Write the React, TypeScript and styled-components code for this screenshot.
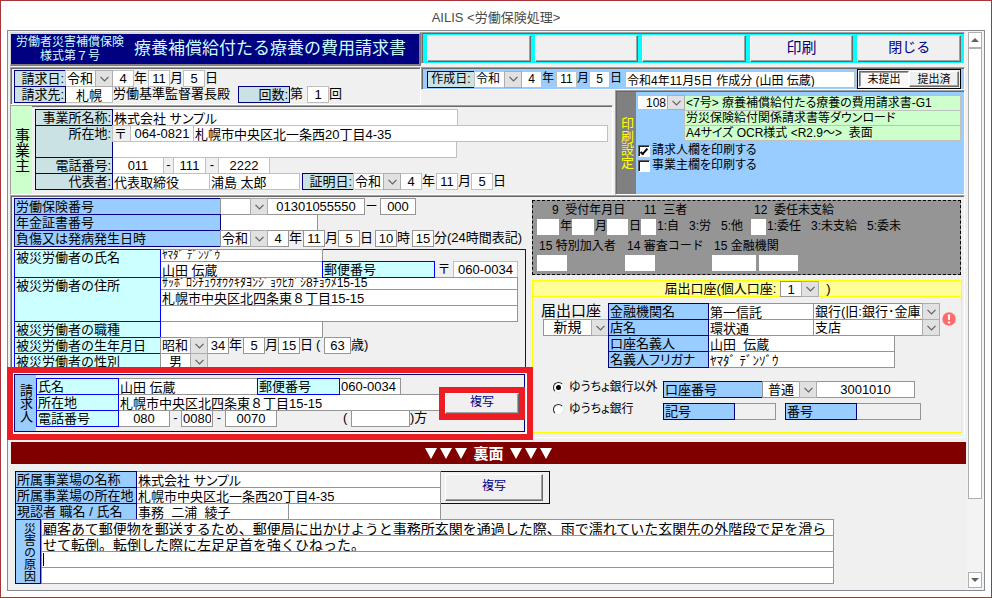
import React from "react";
import styled, { createGlobalStyle, css } from "styled-components";

const NAVY = "#000080";
const BLUE = "#0000ff";
const SKY = "#99ccff";
const AQUA = "#ccffff";
const TEAL = "#cbe2e4";
const MINT = "#ccffcc";
const FACE = "#f0f0f0";
const MARK = "#ed1c24";

const Global = createGlobalStyle`
  *, *::before, *::after { box-sizing: border-box; }
  body {
    margin: 0;
    background: #fff;
    color: #000;
    font: 13px/15px "Liberation Sans", "Noto Sans CJK JP", sans-serif;
  }
  input, select, button { font: inherit; color: inherit; margin: 0; border-radius: 0; }
`;

/* ---------- window ---------- */

const Window = styled.div`
  display: flex;
  flex-direction: column;
  min-height: 100vh;
  padding: 0 6px 6px;
  border: 1px solid #a8343c;
`;

const TitleBar = styled.header`
  display: flex;
  align-items: center;
  justify-content: center;
  height: 29px;
  padding-top: 4px;
  font-size: 13px;
  color: #4a4a4a;
`;

const Frame = styled.div`
  display: flex;
  flex: 1;
  border: 1px solid #868b91;
`;

const Form = styled.main`
  flex: 1;
  min-width: 0;
  padding: 1px 2px 0;
  background: ${FACE};
  white-space: nowrap;
`;

const ScrollBar = styled.div`
  display: flex;
  flex-direction: column;
  width: 17px;
  padding: 1px 2px 2px 1px;
  background: #f3f3f3;
`;

const ScrollButton = styled.button`
  display: grid;
  place-items: center;
  height: 16px;
  padding: 0;
  border: 1px solid #b0b0b0;
  background: #fff;
`;

const Track = styled.div`
  display: flex;
  flex-direction: column;
  flex: 1;
`;

const Thumb = styled.div`
  flex: 0 0 86%;
  border: 1px solid #b0b0b0;
  background: #fff;
`;

/* ---------- shared parts ---------- */

const Panel = styled.section<{ $bg?: string }>`
  border: 1px solid;
  border-color: #a0a0a0 #fff #fff #a0a0a0;
  box-shadow: inset 1px 1px 0 #696969;
  background: ${(p) => p.$bg ?? FACE};
`;

const Row = styled.div<{ $h?: number; $indent?: number; $middle?: boolean }>`
  display: flex;
  align-items: ${(p) => (p.$middle ? "center" : "stretch")};
  height: ${(p) => p.$h ?? 16}px;
  padding-left: ${(p) => p.$indent ?? 0}px;
`;

const Stack = styled.div<{ $w?: number }>`
  display: flex;
  flex-direction: column;
  flex: ${(p) => (p.$w ? `0 0 ${p.$w}px` : "1")};
  min-width: 0;
`;

type CellProps = {
  $w?: number;
  $h?: number;
  $bg?: string;
  $line?: string;
  $align?: string;
  $pad?: number;
  $size?: number;
  $tight?: boolean;
};

/* Bordered cells share their edges: each one overlaps the next by one pixel. */
const cell = css<CellProps>`
  flex: ${(p) => (p.$w ? `0 0 ${p.$w + 1}px` : "1")};
  min-width: 0;
  height: ${(p) => (p.$h ?? 16) + 1}px;
  margin: 0 -1px -1px 0;
  padding: 0 ${(p) => p.$pad ?? 1}px;
  border: 1px solid ${(p) => p.$line ?? "var(--line)"};
  background: ${(p) => p.$bg ?? "#fff"};
  text-align: ${(p) => p.$align ?? "left"};
  font-size: ${(p) => (p.$size ? `${p.$size}px` : "inherit")};
  font-feature-settings: ${(p) => (p.$tight ? '"palt"' : "normal")};
  line-height: 15px;
  outline: none;
`;

const Caption = styled.label<CellProps>`
  ${cell}
  position: relative;
  overflow: hidden;
`;

const Input = styled.input<CellProps>`
  ${cell}
`;

const Text = styled.span<{ $w?: number; $size?: number; $tight?: boolean; $align?: string }>`
  flex: 0 0 ${(p) => (p.$w ? `${p.$w}px` : "auto")};
  padding-left: 1px;
  line-height: 15px;
  text-align: ${(p) => p.$align ?? "left"};
  font-size: ${(p) => (p.$size ? `${p.$size}px` : "inherit")};
  font-feature-settings: ${(p) => (p.$tight ? '"palt"' : "normal")};
  white-space: pre;
`;

const Gap = styled.span<{ $w: number }>`
  flex: 0 0 ${(p) => p.$w}px;
`;

const Lines = styled.div<{ $line: string; $size?: number }>`
  --line: ${(p) => p.$line};
  font-size: ${(p) => p.$size ?? 13}px;
`;

const ComboBox = styled.span<{ $w: number; $h: number }>`
  position: relative;
  display: flex;
  flex: 0 0 ${(p) => p.$w + 1}px;
  height: ${(p) => p.$h + 1}px;
  margin: 0 -1px -1px 0;
`;

const Select = styled.select<{ $align: string }>`
  appearance: none;
  width: 100%;
  padding: 0 18px 0 1px;
  border: 1px solid var(--line);
  background: #fff;
  line-height: 15px;
  text-align: ${(p) => p.$align};
  text-align-last: ${(p) => p.$align};
  outline: none;
`;

const Arrow = styled.span`
  position: absolute;
  top: 0;
  right: 0;
  bottom: 0;
  display: grid;
  place-items: center;
  width: 18px;
  border: 1px solid #adadad;
  background: #e1e1e1;
  pointer-events: none;
`;

const Upright = styled.div<{ $w: number; $bg: string; $color?: string; $size?: number; $line?: string }>`
  display: flex;
  align-items: center;
  justify-content: center;
  flex: 0 0 ${(p) => p.$w}px;
  border: ${(p) => (p.$line ? `1px solid ${p.$line}` : "0")};
  background: ${(p) => p.$bg};
  color: ${(p) => p.$color ?? "#000"};
  font-size: ${(p) => p.$size ?? 13}px;
  writing-mode: vertical-rl;
`;

const RaisedButton = styled.button<{ $w?: number; $h: number; $size?: number }>`
  flex: ${(p) => (p.$w ? `0 0 ${p.$w}px` : "1")};
  min-width: 0;
  height: ${(p) => p.$h}px;
  padding: 0 0 2px;
  border: 1px solid;
  border-color: #fff #696969 #696969 #fff;
  box-shadow: inset -1px -1px 0 #a0a0a0;
  background: ${FACE};
  color: ${NAVY};
  font-size: ${(p) => p.$size ?? 12}px;
`;

function Combo({ w, h = 16, value, label, align = "left" }: { w: number; h?: number; value: string; label: string; align?: string }) {
  return (
    <ComboBox $w={w} $h={h}>
      <Select $align={align} aria-label={label} defaultValue={value}>
        <option>{value}</option>
      </Select>
      <Arrow>
        <svg width="9" height="6" viewBox="0 0 9 6" fill="none" stroke="#606060" strokeWidth="1.2">
          <path d="M.5 .8 4.5 4.8 8.5 .8" />
        </svg>
      </Arrow>
    </ComboBox>
  );
}

type FieldProps = {
  id?: string;
  w?: number;
  h?: number;
  value?: string;
  label: string;
  align?: string;
  bg?: string;
  size?: number;
  tight?: boolean;
  line?: string;
};

function Field({ id, w, h, value = "", label, align, bg, size, tight, line }: FieldProps) {
  return (
    <Input id={id} $w={w} $h={h} $align={align} $bg={bg} $size={size} $tight={tight} $line={line} aria-label={label} defaultValue={value} />
  );
}

type DateProps = { name: string; era: string; y: string; m: string; d: string; box?: number; eraW?: number };

function DateFields({ name, era, y, m, d, box = 21, eraW = 47 }: DateProps) {
  return (
    <>
      <Combo w={eraW} value={era} label={`${name} 元号`} />
      <Field w={box} value={y} label={`${name} 年`} align="center" />
      <Text $w={15}>年</Text>
      <Field w={box} value={m} label={`${name} 月`} align="center" />
      <Text $w={13}>月</Text>
      <Field w={box} value={d} label={`${name} 日`} align="center" />
      <Text $w={16}>日</Text>
    </>
  );
}

/* ---------- top area ---------- */

const TopGrid = styled.div`
  display: grid;
  grid-template-columns: 411px 194px minmax(0, 1fr);
  grid-template-rows: 35px 23px 15px minmax(90px, auto);
`;

const Heading = styled.div`
  display: flex;
  align-items: center;
  gap: 10px;
  margin-bottom: 1px;
  padding-left: 5px;
  border: solid #808080;
  border-width: 2px 2px 2px 1px;
  border-top-color: #d8d8d8;
  border-left-color: #d8d8d8;
  background: ${NAVY};
  color: #ccffff;
`;

const FormKind = styled.div`
  font-size: 12px;
  line-height: 14px;
  text-align: center;
`;

const FormName = styled.h1`
  margin: 0;
  font-size: 17px;
  font-weight: 400;
  line-height: 24px;
`;

const Commands = styled(Panel)`
  grid-column: 2 / 4;
  display: flex;
  align-items: center;
  gap: 4px;
  margin-bottom: 3px;
  padding: 1px 3px 0 5px;
`;

const RequestPanel = styled(Panel)`
  grid-row: 2 / 4;
  padding: 2px 3px;
`;

const CreatedPanel = styled(Panel)`
  grid-column: 2 / 4;
  display: flex;
  align-items: center;
  padding: 0 3px 0 5px;
  font-size: 12px;
`;

const CreatedFields = styled(Lines)`
  display: flex;
  flex: 1;
  min-width: 0;
  margin-right: 3px;
`;

const Toggle = styled.div`
  display: flex;
  flex: 0 0 104px;
  height: 20px;
  padding: 1px;
  border: 1px solid #000;
  background: ${FACE};
`;

const ToggleButton = styled.button<{ $on?: boolean }>`
  flex: 1;
  padding: 0;
  border: 1px solid;
  border-color: ${(p) => (p.$on ? "#696969 #fff #fff #696969" : "#fff #696969 #696969 #fff")};
  box-shadow: inset ${(p) => (p.$on ? "1px 1px" : "-1px -1px")} 0 #a0a0a0;
  background: ${(p) => (p.$on ? "#f8f8f8" : FACE)};
  font-size: 11px;
  line-height: 12px;
`;

const EmployerPanel = styled(Panel)`
  grid-row: 4;
  grid-column: 1 / 3;
  display: flex;
  margin-right: 2px;
`;

const EmployerRows = styled(Lines)`
  flex: 1;
  padding: 3px 5px 3px 3px;
`;

const PrintPanel = styled(Panel)`
  grid-row: 3 / 5;
  grid-column: 3;
  display: flex;
  padding: 1px 0 0 1px;
`;

const PrintBody = styled(Lines)`
  flex: 1;
  min-width: 0;
  padding: 3px 3px 0 1px;
`;

const GreenLines = styled.div`
  flex: 1;
  min-width: 0;
`;

const GreenLine = styled.output<CellProps>`
  ${cell}
  display: block;
  margin-right: 0;
`;

const CheckList = styled.div`
  padding: 3px 0 0 1px;
`;

const CheckLine = styled.label`
  display: flex;
  align-items: center;
  gap: 2px;
  height: 15px;
  font-size: 12px;
  font-feature-settings: "palt";
`;

const CheckBox = styled.input`
  appearance: none;
  display: grid;
  place-items: center;
  width: 12px;
  height: 12px;
  border: 1px solid;
  border-color: #606060 #fff #fff #606060;
  box-shadow: inset 1px 1px 0 #202020;
  background: #fff;
  &:checked::after {
    content: "";
    width: 4px;
    height: 8px;
    border: solid #000;
    border-width: 0 2px 2px 0;
    transform: rotate(42deg);
  }
`;

/* ---------- middle area ---------- */

const Middle = styled(Panel)`
  display: flex;
  padding: 2px 2px 4px 3px;
`;

const LeftColumn = styled(Lines)`
  flex: 0 0 518px;
`;

const Injured = styled.div`
  width: 512px;
  margin-top: 3px;
  box-shadow: inset 0 0 0 1px ${BLUE};
`;

const Block = styled.div`
  display: flex;
`;

const Claimant = styled.div`
  position: relative;
  display: flex;
  width: 511px;
  height: 58px;
  margin-top: 5px;
  border: 1px solid ${NAVY};
  background: ${FACE};
`;

const Highlight = styled.div`
  position: absolute;
  inset: -8px -9px -9px -8px;
  border: 6px solid ${MARK};
  box-shadow: inset 0 0 0 1px #fff;
  pointer-events: none;
`;

const ClaimantRows = styled.div`
  flex: 1;
  min-width: 0;
  padding-top: 3px;
`;

const ButtonMark = styled.div`
  position: relative;
  z-index: 1;
  display: flex;
  align-self: center;
  flex: 0 0 86px;
  height: 33px;
  margin-right: -1px;
  border: 6px solid ${MARK};
`;

const RightColumn = styled(Lines)`
  flex: 1;
  min-width: 0;
`;

const Office = styled.div`
  margin: 2px 1px 5px 0;
  padding-bottom: 3px;
  border: 1px dashed #000;
  background: #959595;
  font-size: 12px;
`;

const Blank = styled.input<{ $w: number }>`
  flex: 0 0 ${(p) => p.$w}px;
  min-width: 0;
  height: 16px;
  padding: 0;
  border: 0;
  background: #fff;
  outline: none;
`;

const Account = styled.div`
  min-height: 153px;
  border: 1px solid #ffff00;
`;

const AccountTitle = styled.div`
  display: flex;
  justify-content: center;
  height: 16px;
  border-bottom: 1px solid #ffff00;
  background: #ffff99;
`;

const AccountBody = styled.div`
  display: flex;
  padding: 6px 0 0 8px;
`;

const Kind = styled.div`
  flex: 0 0 67px;
  font-size: 14px;
`;

const KindTitle = styled.div`
  height: 16px;
  font-size: 15px;
`;

const KindSelect = styled.div`
  padding-left: 2px;
`;

const Alert = styled.svg`
  align-self: flex-start;
  flex: 0 0 14px;
  margin: 9px 0 0 3px;
`;

const Banks = styled.div`
  padding: 14px 0 0 20px;
`;

const BankRow = styled.div`
  display: flex;
  align-items: flex-start;
  height: 22px;
`;

const Choice = styled.label`
  display: flex;
  align-items: center;
  gap: 5px;
  flex: 0 0 110px;
  height: 13px;
  font-size: 12px;
  font-feature-settings: "palt";
`;

const Radio = styled.input`
  appearance: none;
  display: grid;
  place-items: center;
  width: 11px;
  height: 11px;
  border: 1px solid;
  border-color: #202020 #e8e8e8 #e8e8e8 #202020;
  border-radius: 50%;
  background: #fff;
  &:checked::after {
    content: "";
    width: 5px;
    height: 5px;
    border-radius: 50%;
    background: #000;
  }
`;

/* ---------- reverse side ---------- */

const ReverseBar = styled.h2`
  display: flex;
  align-items: center;
  justify-content: center;
  height: 22px;
  margin: 4px -1px 7px 1px;
  background: #800000;
  color: #fff;
  font-size: 15px;
  font-weight: 700;
  gap: 6px;
`;

const Reverse = styled(Lines)`
  padding: 0 0 5px 5px;
`;

const Workplace = styled.div`
  display: flex;
  width: 535px;
  height: 33px;
  margin-bottom: -1px;
  box-shadow: inset 0 0 0 1px ${NAVY};
`;

const CopyArea = styled.div`
  display: flex;
  align-items: center;
  padding-left: 5px;
`;

const Cause = styled.div`
  display: flex;
`;

const CauseLines = styled.div`
  position: relative;
  flex: 0 1 792px;
  min-width: 0;
  padding-bottom: 1px;
  font-size: 14px;
`;

const Caret = styled.span`
  position: absolute;
  top: 34px;
  left: 2px;
  width: 1px;
  height: 13px;
  background: #000;
`;

const Triangles = () => (
  <svg width="42" height="11" viewBox="0 0 42 11" fill="#fff">
    <path d="M0 0h12L6 11zM15 0h12l-6 11zM30 0h12l-6 11z" />
  </svg>
);

const CAUSE = [
  "顧客あて郵便物を郵送するため、郵便局に出かけようと事務所玄関を通過した際、雨で濡れていた玄関先の外階段で足を滑ら",
  "せて転倒。転倒した際に左足足首を強くひねった。",
  "",
  "",
];

export default function App() {
  return (
    <>
      <Global />
      <Window>
        <TitleBar>AILIS &lt;労働保険処理&gt;</TitleBar>
        <Frame>
          <Form>
            <TopGrid>
              <Heading>
                <FormKind>
                  労働者災害補償保険
                  <br />
                  様式第７号
                </FormKind>
                <FormName>療養補償給付たる療養の費用請求書</FormName>
              </Heading>

              <Commands $bg="#00ffff">
                <RaisedButton $h={27} aria-label="機能1" />
                <RaisedButton $h={27} aria-label="機能2" />
                <RaisedButton $h={27} aria-label="機能3" />
                <RaisedButton $h={27} $size={15}>印刷</RaisedButton>
                <RaisedButton $h={27} $size={14}>閉じる</RaisedButton>
              </Commands>

              <RequestPanel>
                <Lines $line="#c0c0c0">
                  <Row>
                    <Caption $w={51} $bg={TEAL} $line={NAVY} $align="right">請求日:</Caption>
                    <DateFields name="請求日" era="令和" y="4" m="11" d="5" />
                  </Row>
                  <Row>
                    <Caption htmlFor="office" $w={51} $bg={TEAL} $line={NAVY} $align="right">請求先:</Caption>
                    <Field id="office" w={47} value="札幌" label="請求先" align="center" />
                    <Text $w={126}>労働基準監督署長殿</Text>
                    <Caption htmlFor="times" $w={51} $bg={TEAL} $line={NAVY} $align="right">回数:</Caption>
                    <Text $w={18}>第</Text>
                    <Field id="times" w={21} value="1" label="回数" align="center" />
                    <Text>回</Text>
                  </Row>
                </Lines>
              </RequestPanel>

              <CreatedPanel $bg={SKY}>
                <CreatedFields $line="#c0c0c0" $size={12}>
                  <Caption $w={47} $bg={TEAL} $line={NAVY} $align="center">作成日:</Caption>
                  <DateFields name="作成日" era="令和" y="4" m="11" d="5" box={20} />
                  <Field value="令和4年11月5日 作成分 (山田 伝蔵)" label="作成分" />
                </CreatedFields>
                <Toggle>
                  <ToggleButton $on aria-pressed="true">未提出</ToggleButton>
                  <ToggleButton aria-pressed="false">提出済</ToggleButton>
                </Toggle>
              </CreatedPanel>

              <EmployerPanel>
                <Upright $w={21} $bg={MINT} $size={15}>事業主</Upright>
                <EmployerRows $line="#c0c0c0">
                  <Row>
                    <Caption htmlFor="firm" $w={77} $bg={TEAL} $line={NAVY} $align="right">事業所名称:</Caption>
                    <Field id="firm" w={345} value="株式会社 サンプル" label="事業所名称" tight />
                  </Row>
                  <Block>
                    <Caption htmlFor="address" $w={77} $h={32} $bg={TEAL} $line={NAVY} $align="right">所在地:</Caption>
                    <Stack>
                      <Row>
                        <Caption as="span" $w={18} $bg={FACE}>〒</Caption>
                        <Field w={63} value="064-0821" label="郵便番号" align="center" />
                        <Field id="address" value="札幌市中央区北一条西20丁目4-35" label="所在地" />
                      </Row>
                      <Row>
                        <Field w={344} label="所在地 2行目" />
                      </Row>
                    </Stack>
                  </Block>
                  <Row>
                    <Caption htmlFor="tel" $w={77} $bg={TEAL} $line={NAVY} $align="right">電話番号:</Caption>
                    <Field id="tel" w={51} value="011" label="電話番号 市外局番" align="center" />
                    <Text $w={10} $align="center">-</Text>
                    <Field w={32} value="111" label="電話番号 局番" align="center" />
                    <Text $w={13} $align="center">-</Text>
                    <Field w={51} value="2222" label="電話番号 番号" align="center" />
                  </Row>
                  <Row>
                    <Caption htmlFor="rep" $w={77} $bg={TEAL} $line={NAVY} $align="right">代表者:</Caption>
                    <Field id="rep" w={97} value="代表取締役" label="代表者 役職" />
                    <Field w={90} value="浦島 太郎" label="代表者 氏名" />
                    <Gap $w={3} />
                    <Caption $w={51} $bg={TEAL} $line={NAVY} $align="right">証明日:</Caption>
                    <DateFields name="証明日" era="令和" y="4" m="11" d="5" />
                  </Row>
                </EmployerRows>
              </EmployerPanel>

              <PrintPanel $bg={SKY}>
                <Upright $w={19} $bg="#808080" $color="#ffff00">印刷設定</Upright>
                <PrintBody $line="#c0c0c0" $size={12}>
                  <Block>
                    <Combo w={47} h={14} value="108" label="様式番号" align="right" />
                    <GreenLines>
                      <GreenLine $h={15} $bg={MINT} $tight>&lt;7号&gt; 療養補償給付たる療養の費用請求書-G1</GreenLine>
                      <GreenLine $h={15} $bg={MINT} $tight>労災保険給付関係請求書等ダウンロード</GreenLine>
                      <GreenLine $h={15} $bg={MINT} $tight>A4サイズ OCR様式 &lt;R2.9～&gt;&nbsp; 表面</GreenLine>
                    </GreenLines>
                  </Block>
                  <CheckList>
                    <CheckLine>
                      <CheckBox type="checkbox" defaultChecked />
                      請求人欄を印刷する
                    </CheckLine>
                    <CheckLine>
                      <CheckBox type="checkbox" />
                      事業主欄を印刷する
                    </CheckLine>
                  </CheckList>
                </PrintBody>
              </PrintPanel>
            </TopGrid>

            <Middle>
              <LeftColumn $line="#959595">
                <Row>
                  <Caption htmlFor="insno" $w={206} $bg={SKY} $line={NAVY}>労働保険番号</Caption>
                  <Combo w={47} value="" label="労働保険番号 種別" />
                  <Field id="insno" w={97} value="01301055550" label="労働保険番号" align="center" />
                  <Text $w={16}>－</Text>
                  <Field w={35} value="000" label="労働保険番号 枝番" align="center" />
                </Row>
                <Row>
                  <Caption htmlFor="pension" $w={206} $bg={SKY} $line={NAVY}>年金証書番号</Caption>
                  <Field id="pension" w={97} label="年金証書番号" />
                </Row>
                <Row>
                  <Caption $w={206} $bg={SKY} $line={NAVY} $tight>負傷又は発病発生日時</Caption>
                  <DateFields name="発生日" era="令和" y="4" m="11" d="5" />
                  <Field w={21} value="10" label="時" align="center" />
                  <Text $w={16}>時</Text>
                  <Field w={21} value="15" label="分" align="center" />
                  <Text>分(24時間表記)</Text>
                </Row>

                <Injured>
                  <Block>
                    <Caption htmlFor="name" $w={146} $h={28} $bg={AQUA} $line={BLUE}>被災労働者の氏名</Caption>
                    <Stack>
                      <Row $h={12}>
                        <Field w={162} h={12} size={11} value="ﾔﾏﾀﾞ ﾃﾞﾝｿﾞｳ" label="氏名 カナ" />
                      </Row>
                      <Row>
                        <Field id="name" w={162} value="山田 伝蔵" label="氏名" />
                        <Caption htmlFor="zip" $w={112} $bg={AQUA} $line={BLUE}>郵便番号</Caption>
                        <Text $w={19} $align="center">〒</Text>
                        <Field id="zip" w={64} value="060-0034" label="郵便番号" align="center" line="#c0c0c0" />
                      </Row>
                    </Stack>
                  </Block>
                  <Block>
                    <Caption htmlFor="home" $w={146} $h={44} $bg={AQUA} $line={BLUE}>被災労働者の住所</Caption>
                    <Stack $w={357}>
                      <Row $h={12}>
                        <Field h={12} size={12} value="ｻｯﾎﾟﾛｼﾁｭｳｵｳｸｷﾀﾖﾝｼﾞｮｳﾋｶﾞｼ8ﾁｮｳﾒ15-15" label="住所 カナ" />
                      </Row>
                      <Row>
                        <Field id="home" value="札幌市中央区北四条東８丁目15-15" label="住所" />
                      </Row>
                      <Row>
                        <Field label="住所 2行目" />
                      </Row>
                    </Stack>
                  </Block>
                  <Row>
                    <Caption htmlFor="job" $w={146} $bg={AQUA} $line={BLUE}>被災労働者の職種</Caption>
                    <Field id="job" w={162} label="職種" />
                  </Row>
                  <Row>
                    <Caption $w={146} $bg={AQUA} $line={BLUE}>被災労働者の生年月日</Caption>
                    <DateFields name="生年月日" era="昭和" y="34" m="5" d="15" />
                    <Text $w={9}>(</Text>
                    <Field w={26} value="63" label="年齢" align="center" />
                    <Text>歳)</Text>
                  </Row>
                  <Row>
                    <Caption $w={146} $bg={AQUA} $line={BLUE}>被災労働者の性別</Caption>
                    <Combo w={47} value="男" label="性別" align="center" />
                  </Row>
                </Injured>

                <Claimant>
                  <Highlight />
                  <Upright $w={21} $bg={SKY}>請求人</Upright>
                  <ClaimantRows>
                    <Row>
                      <Caption htmlFor="cname" $w={82} $bg={AQUA} $line={BLUE}>氏名</Caption>
                      <Field id="cname" w={139} value="山田 伝蔵" label="請求人 氏名" />
                      <Caption htmlFor="czip" $w={82} $bg={AQUA} $line={BLUE}>郵便番号</Caption>
                      <Field id="czip" w={61} value="060-0034" label="請求人 郵便番号" />
                    </Row>
                    <Row>
                      <Caption htmlFor="caddr" $w={82} $bg={AQUA} $line={BLUE}>所在地</Caption>
                      <Field id="caddr" value="札幌市中央区北四条東８丁目15-15" label="請求人 所在地" />
                    </Row>
                    <Row>
                      <Caption htmlFor="ctel" $w={82} $bg={AQUA} $line={BLUE}>電話番号</Caption>
                      <Field id="ctel" w={51} value="080" label="請求人 市外局番" align="center" />
                      <Text $w={12} $align="center">-</Text>
                      <Field w={31} value="0080" label="請求人 局番" align="center" />
                      <Text $w={13} $align="center">-</Text>
                      <Field w={51} value="0070" label="請求人 番号" align="center" />
                      <Gap $w={66} />
                      <Text $w={9}>(</Text>
                      <Field w={58} label="方" />
                      <Text>)方</Text>
                    </Row>
                  </ClaimantRows>
                  <ButtonMark>
                    <RaisedButton $h={21}>複写</RaisedButton>
                  </ButtonMark>
                </Claimant>
              </LeftColumn>

              <RightColumn $line="#959595">
                <Office>
                  <Row $h={18} $indent={18} $middle>
                    <Text $w={92}>9  受付年月日</Text>
                    <Text $w={110}>11  三者</Text>
                    <Text>12  委任未支給</Text>
                  </Row>
                  <Row $h={18} $indent={4}>
                    <Blank $w={22} aria-label="受付 年" />
                    <Text $w={13}>年</Text>
                    <Blank $w={22} aria-label="受付 月" />
                    <Text $w={9}>月</Text>
                    <Blank $w={21} aria-label="受付 日" />
                    <Text $w={13}>日</Text>
                    <Blank $w={15} aria-label="三者" />
                    <Text $w={95}>1:自   3:労   5:他</Text>
                    <Blank $w={15} aria-label="委任未支給" />
                    <Text>1:委任   3:未支給   5:委未</Text>
                  </Row>
                  <Row $h={18} $indent={5} $middle>
                    <Text $w={88}>15 特別加入者</Text>
                    <Text $w={87}>14 審査コード</Text>
                    <Text>15 金融機関</Text>
                  </Row>
                  <Row $indent={4}>
                    <Blank $w={30} aria-label="特別加入者" />
                    <Gap $w={58} />
                    <Blank $w={30} aria-label="審査コード" />
                    <Gap $w={57} />
                    <Blank $w={44} aria-label="金融機関コード" />
                    <Gap $w={3} />
                    <Blank $w={39} aria-label="金融機関支店コード" />
                  </Row>
                </Office>

                <Account>
                  <AccountTitle>
                    <Text>届出口座(個人口座: </Text>
                    <Combo w={38} h={15} value="1" label="個人口座" align="center" />
                    <Text>  )</Text>
                  </AccountTitle>
                  <AccountBody>
                    <Kind>
                      <KindTitle>届出口座</KindTitle>
                      <KindSelect>
                        <Combo w={60} value="新規" label="届出口座" align="center" />
                      </KindSelect>
                    </Kind>
                    <Stack $w={331}>
                      <Row>
                        <Caption htmlFor="bank" $w={100} $bg={SKY} $line={NAVY}>金融機関名</Caption>
                        <Field id="bank" w={105} value="第一信託" label="金融機関名" />
                        <Combo w={126} value="銀行(旧:銀行･金庫)" label="金融機関種別" />
                      </Row>
                      <Row>
                        <Caption htmlFor="branch" $w={100} $bg={SKY} $line={NAVY}>店名</Caption>
                        <Field id="branch" w={105} value="環状通" label="店名" />
                        <Combo w={126} value="支店" label="店種別" />
                      </Row>
                      <Row>
                        <Caption htmlFor="holder" $w={100} $bg={SKY} $line={NAVY}>口座名義人</Caption>
                        <Field id="holder" w={186} value="山田&nbsp; 伝蔵" label="口座名義人" />
                      </Row>
                      <Row>
                        <Caption htmlFor="holderkana" $w={100} $bg={SKY} $line={NAVY} $tight>名義人フリガナ</Caption>
                        <Field id="holderkana" w={186} value="ﾔﾏﾀﾞ ﾃﾞﾝｿﾞｳ" label="名義人フリガナ" />
                      </Row>
                    </Stack>
                    <Alert width="14" height="14" viewBox="0 0 14 14" role="img" aria-label="警告">
                      <circle cx="7" cy="7" r="6.7" fill="#ff6b6b" />
                      <path d="M5.8 2.5h2.4l-.4 5.6H6.2z" fill="#fff" />
                      <circle cx="7" cy="10.4" r="1.2" fill="#fff" />
                    </Alert>
                  </AccountBody>
                  <Banks>
                    <BankRow>
                      <Choice>
                        <Radio type="radio" name="bank" defaultChecked />
                        ゆうちょ銀行以外
                      </Choice>
                      <Caption htmlFor="accno" $w={99} $bg={SKY} $line={NAVY}>口座番号</Caption>
                      <Combo w={54} value="普通" label="口座種別" align="center" />
                      <Field id="accno" w={98} value="3001010" label="口座番号" align="center" />
                    </BankRow>
                    <BankRow>
                      <Choice>
                        <Radio type="radio" name="bank" />
                        ゆうちょ銀行
                      </Choice>
                      <Caption htmlFor="mark" $w={71} $bg={SKY} $line={NAVY}>記号</Caption>
                      <Field id="mark" w={41} label="記号" bg={FACE} />
                      <Gap $w={10} />
                      <Caption htmlFor="num" $w={71} $bg={SKY} $line={NAVY}>番号</Caption>
                      <Field id="num" w={64} label="番号" bg={FACE} />
                    </BankRow>
                  </Banks>
                </Account>
              </RightColumn>
            </Middle>

            <ReverseBar>
              <Triangles />
              裏面
              <Triangles />
            </ReverseBar>

            <Reverse $line="#959595">
              <Workplace>
                <Stack $w={425}>
                  <Row>
                    <Caption htmlFor="wname" $w={121} $bg={SKY} $line={NAVY} $tight>所属事業場の名称</Caption>
                    <Field id="wname" value="株式会社 サンプル" label="所属事業場の名称" tight />
                  </Row>
                  <Row>
                    <Caption htmlFor="waddr" $w={121} $bg={SKY} $line={NAVY} $tight>所属事業場の所在地</Caption>
                    <Field id="waddr" value="札幌市中央区北一条西20丁目4-35" label="所属事業場の所在地" />
                  </Row>
                </Stack>
                <CopyArea>
                  <RaisedButton $w={98} $h={27}>複写</RaisedButton>
                </CopyArea>
              </Workplace>
              <Row>
                <Caption htmlFor="witness" $w={121} $bg={SKY} $line={NAVY}>現認者 職名 / 氏名</Caption>
                <Field id="witness" w={152} value="事務&nbsp; 二浦&nbsp; 綾子" label="現認者 職名" />
                <Field w={152} label="現認者 氏名" />
              </Row>
              <Cause>
                <Upright $w={26} $bg={SKY} $line={NAVY} $size={12}>災害の原因</Upright>
                <CauseLines>
                  {CAUSE.map((line, i) => (
                    <Row key={i}>
                      <Field value={line} label={`災害の原因 ${i + 1}行目`} />
                    </Row>
                  ))}
                  <Caret />
                </CauseLines>
              </Cause>
            </Reverse>
          </Form>
          <ScrollBar>
            <ScrollButton aria-label="上へ">
              <svg width="8" height="4" viewBox="0 0 8 4" fill="#606060">
                <path d="M4 0 8 4H0z" />
              </svg>
            </ScrollButton>
            <Track>
              <Thumb />
            </Track>
            <ScrollButton aria-label="下へ">
              <svg width="8" height="4" viewBox="0 0 8 4" fill="#606060">
                <path d="M0 0h8L4 4z" />
              </svg>
            </ScrollButton>
          </ScrollBar>
        </Frame>
      </Window>
    </>
  );
}
